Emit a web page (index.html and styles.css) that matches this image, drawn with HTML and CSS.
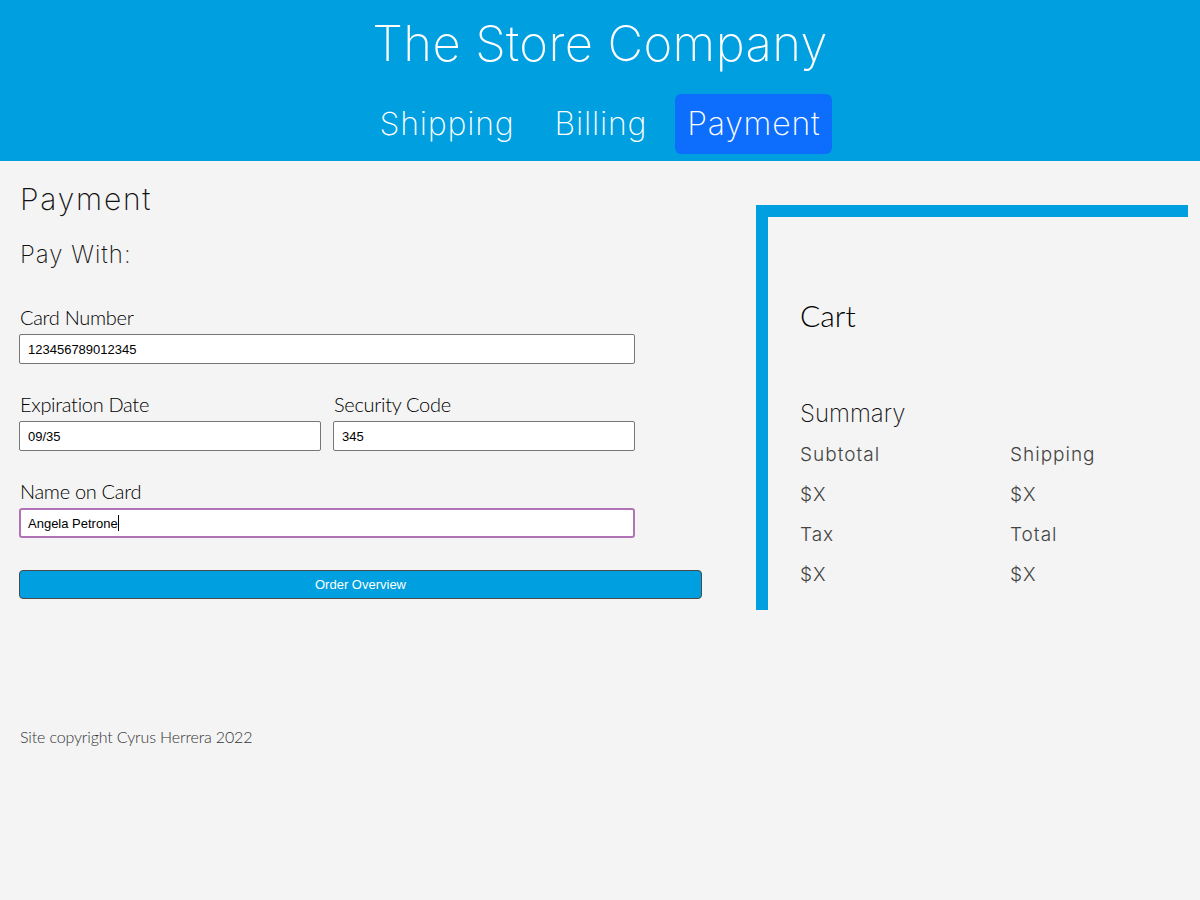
FILE: index.html
```html
<!DOCTYPE html>
<html lang="en">
<head>
<meta charset="utf-8">
<title>The Store Company - Payment</title>
<link rel="stylesheet" href="styles.css">
</head>
<body>
<header class="site-header">
  <h1 class="brand">The Store Company</h1>
  <nav class="steps">
    <a class="step" href="#">Shipping</a>
    <a class="step" href="#">Billing</a>
    <a class="step active" href="#">Payment</a>
  </nav>
</header>
<main class="page">
  <section class="checkout">
    <h2 class="title">Payment</h2>
    <h3 class="subtitle">Pay With:</h3>
    <form class="form">
      <div class="field">
        <label class="label">Card Number</label>
        <input class="input" type="text" value="123456789012345">
      </div>
      <div class="field-row">
        <div class="field">
          <label class="label">Expiration Date</label>
          <input class="input" type="text" value="09/35">
        </div>
        <div class="field">
          <label class="label">Security Code</label>
          <input class="input" type="text" value="345">
        </div>
      </div>
      <div class="field">
        <label class="label">Name on Card</label>
        <div class="input focused">Angela Petrone<span class="caret"></span></div>
      </div>
      <button class="submit" type="button">Order Overview</button>
    </form>
    <footer class="footer">Site copyright Cyrus Herrera 2022</footer>
  </section>
  <aside class="cart">
    <h2 class="cart-title">Cart</h2>
    <h3 class="summary-title">Summary</h3>
    <div class="summary">
      <span>Subtotal</span><span>Shipping</span>
      <span>$X</span><span>$X</span>
      <span>Tax</span><span>Total</span>
      <span>$X</span><span>$X</span>
    </div>
  </aside>
</main>
</body>
</html>
```

FILE: styles.css
```css
* { box-sizing: border-box; }
html, body { margin: 0; padding: 0; }
body {
  background: #f4f4f4;
  font-family: Inter, "Liberation Sans", sans-serif;
  font-weight: 200;
  color: #111;
  min-height: 900px;
}
.site-header {
  background: #009fe0;
  height: 161px;
  display: flex;
  flex-direction: column;
  align-items: center;
  padding-top: 12px;
}
.brand {
  margin: 0;
  font-family: Inter, sans-serif;
  font-weight: 200;
  font-size: 49px;
  line-height: 64px;
  color: #fff;
  letter-spacing: 0.4px;
}
.steps {
  display: flex;
  gap: 16px;
  margin-top: 18px;
}
.step {
  font-family: Inter, sans-serif;
  font-weight: 200;
  font-size: 32px;
  line-height: 48px;
  padding: 6px 12px;
  border-radius: 6px;
  color: #fff;
  text-decoration: none;
  letter-spacing: 0.8px;
}
.step.active { background: #0d6efd; }

.page {
  display: flex;
  padding: 0 12px 0 19px;
}
.checkout {
  width: 684px;
  padding-top: 20px;
}
.title {
  margin: 0;
  font-weight: 200;
  font-size: 30px;
  line-height: 36px;
  padding-left: 1px;
  letter-spacing: 1.8px;
}
.subtitle {
  margin: 23px 0 0;
  font-weight: 200;
  font-size: 24px;
  line-height: 30px;
  padding-left: 1px;
  letter-spacing: 1px;
}
.form { margin-top: 35px; }
.field { display: flex; flex-direction: column; }
.field + .field-row, .field-row + .field { margin-top: 28px; }
.field-row {
  display: flex;
  gap: 12px;
  width: 616px;
}
.field-row .field { flex: 1; }
.label {
  font-family: Lato, sans-serif;
  font-weight: 300;
  font-size: 20px;
  line-height: 24px;
  padding-left: 1px;
  margin-bottom: 5px;
  color: #000;
  letter-spacing: -0.3px;
}
.input {
  width: 616px;
  height: 30px;
  border: 1px solid #767676;
  border-radius: 2px;
  background: #fff;
  font-family: "Liberation Sans", Arial, sans-serif;
  font-weight: 400;
  font-size: 13px;
  color: #000;
  padding: 0 8px;
  margin: 0;
  outline: none;
  display: flex;
  align-items: center;
}
.field-row .input { width: 100%; }
.input.focused {
  border: 2px solid #b173b6;
  border-radius: 3px;
  padding: 0 7px;
}
.caret {
  display: inline-block;
  width: 1px;
  height: 16px;
  background: #000;
}
.submit {
  display: block;
  width: 683px;
  height: 29px;
  margin-top: 32px;
  background: #009fe0;
  border: 1px solid #4a4a4a;
  border-radius: 4px;
  color: #fff;
  font-family: "Liberation Sans", Arial, sans-serif;
  font-size: 13px;
  padding: 0;
}
.footer {
  margin-top: 128px;
  font-family: Lato, sans-serif;
  font-weight: 300;
  font-size: 16px;
  line-height: 20px;
  color: #333;
  padding-left: 1px;
  letter-spacing: -0.15px;
}
.cart {
  margin-left: 53px;
  margin-top: 44px;
  width: 432px;
  height: 405px;
  border-top: 12px solid #009fe0;
  border-left: 12px solid #009fe0;
  padding: 80px 0 0 32px;
}
.cart-title {
  margin: 0;
  font-family: Lato, sans-serif;
  font-weight: 300;
  font-size: 30px;
  line-height: 36px;
  color: #000;
}
.summary-title {
  margin: 66px 0 0;
  font-weight: 200;
  font-size: 24px;
  line-height: 30px;
  letter-spacing: 0;
}
.summary {
  display: grid;
  grid-template-columns: 210px 1fr;
  row-gap: 16px;
  margin-top: 14px;
  font-size: 19px;
  line-height: 24px;
  font-weight: 300;
  color: #444;
  letter-spacing: 1px;
}
```
